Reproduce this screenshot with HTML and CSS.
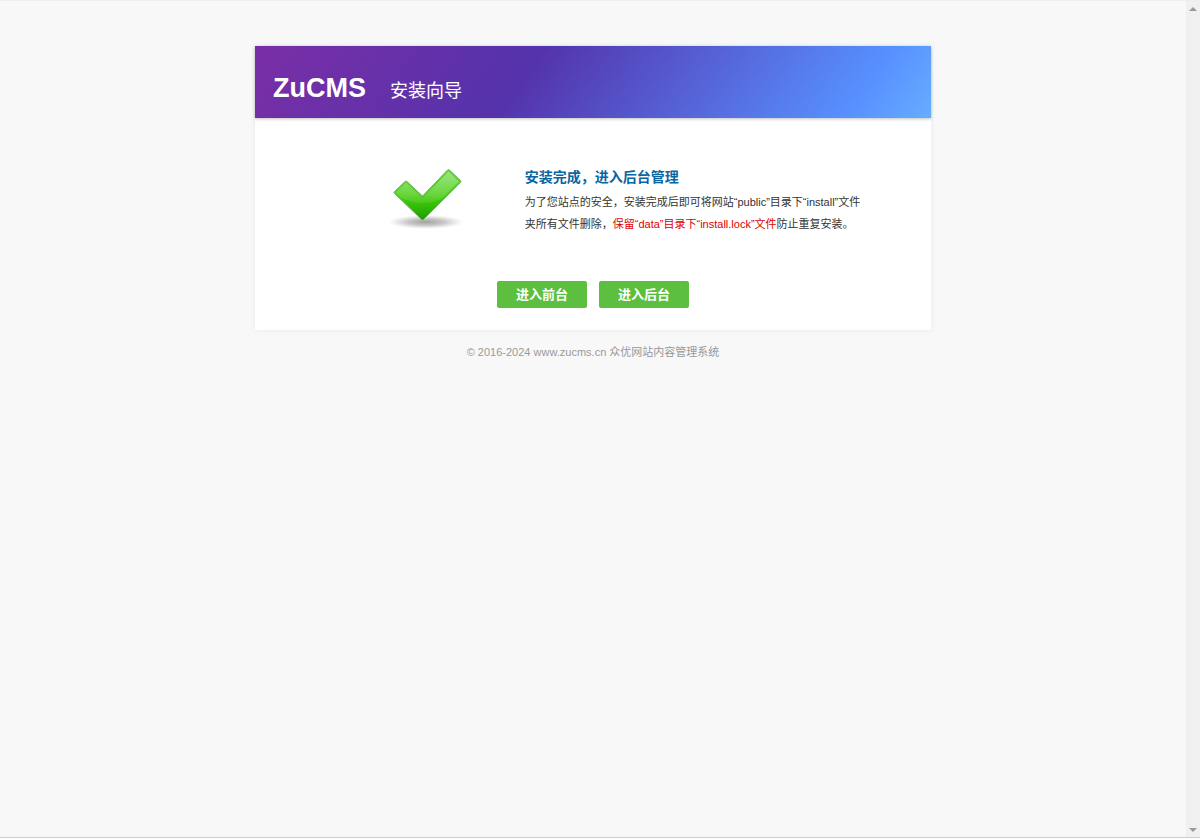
FILE: index.html
```html
<!DOCTYPE html>
<html lang="zh-CN">
<head>
<meta charset="utf-8">
<title>ZuCMS 安装向导</title>
<link rel="stylesheet" href="styles.css">
</head>
<body>
<div class="page">
  <div class="wrap">
    <main class="card">
      <header class="head">
        <h1 class="logo">ZuCMS</h1>
        <span class="subtitle">安装向导</span>
      </header>
      <section class="result">
        <div class="picture">
          <svg class="tick" width="80" height="68" viewBox="0 0 80 68" aria-hidden="true">
            <defs>
              <linearGradient id="green" x1="0" y1="0" x2="0" y2="1">
                <stop offset="0" stop-color="#62d435"/>
                <stop offset=".5" stop-color="#4bce16"/>
                <stop offset=".72" stop-color="#35bd06"/>
                <stop offset="1" stop-color="#1c9c00"/>
              </linearGradient>
              <linearGradient id="gloss" x1="0" y1="0" x2="0" y2="1">
                <stop offset="0" stop-color="#fff" stop-opacity=".38"/>
                <stop offset="1" stop-color="#fff" stop-opacity=".08"/>
              </linearGradient>
              <radialGradient id="shade">
                <stop offset="0" stop-color="#777" stop-opacity=".7"/>
                <stop offset=".5" stop-color="#888" stop-opacity=".45"/>
                <stop offset="1" stop-color="#aaa" stop-opacity="0"/>
              </radialGradient>
            </defs>
            <ellipse cx="39" cy="58" rx="38" ry="7" fill="url(#shade)"/>
            <path d="M7.500 27.500 18 17.500Q19 16.500 20 17.500L35.500 32 60.500 6Q61.500 5 62.500 6L73.500 16.500Q74.500 17.500 73.500 18.500L36.500 55.500Q35.500 56.500 34.500 55.500L7.500 29.500Q6.500 28.500 7.500 27.500Z" fill="url(#green)" stroke="#7cb86d"/>
            <path d="M8.500 28.500 19 18.500 35.500 34 61.500 7.500 72 17.500 55 34Q38 44 14 34Z" fill="url(#gloss)"/>
          </svg>
        </div>
        <div class="message">
          <h2 class="title">安装完成，进入后台管理</h2>
          <p class="text">为了您站点的安全，安装完成后即可将网站“public”目录下“install”文件夹所有文件删除，<span class="warn">保留“data”目录下“install.lock”文件</span>防止重复安装。</p>
        </div>
      </section>
      <nav class="actions">
        <a class="btn" href="#front">进入前台</a>
        <a class="btn" href="#admin">进入后台</a>
      </nav>
    </main>
    <footer class="foot">© 2016-2024 www.zucms.cn 众优网站内容管理系统</footer>
  </div>
  <div class="scroll" aria-hidden="true">
    <svg width="8" height="4" viewBox="0 0 8 4"><path d="M4 0 8 4H0Z" fill="#999"/></svg>
    <svg width="8" height="4" viewBox="0 0 8 4"><path d="M0 0H8L4 4Z" fill="#999"/></svg>
  </div>
</div>
</body>
</html>
```
FILE: styles.css
```css
* { box-sizing: border-box; }
body {
  margin: 0;
  background: #f8f8f8;
  color: #333;
  font: 11px/22px "Liberation Sans", "Noto Sans CJK SC", sans-serif;
}
h1, h2, p { margin: 0; }
.page {
  display: flex;
  min-height: 100vh;
  border-top: 1px solid #eee;
  border-bottom: 1px solid #ccc;
}
.wrap { flex: 1; padding: 45px 0 0; }
.card {
  width: 57%;
  min-width: 600px;
  margin: 0 auto;
  padding-bottom: 22px;
  background: #fff;
  box-shadow: 0 0 6px #e4ebf0;
}
.head {
  display: flex;
  align-items: baseline;
  gap: 24px;
  padding: 24px 18px 9px;
  background: linear-gradient(125deg, #7a2ea6 0%, #5433ac 40%, #5790ff 88%, #66adff 100%);
  box-shadow: 0 1px 3px rgba(0, 0, 0, .25);
  color: #fff;
}
.logo { font-size: 27px; line-height: 36px; }
.subtitle { font-size: 18px; line-height: 36px; }
.result { display: flex; padding: 46px 18px 0 0; }
.picture { width: 41%; display: flex; justify-content: flex-end; }
.tick { margin-right: 58px; }
.message { width: 340px; }
.title { margin-bottom: 1px; color: #0a66a3; font-size: 14px; line-height: 26px; }
.warn { color: #d00; }
.actions { display: flex; justify-content: center; gap: 12px; margin-top: 46px; }
.btn {
  width: 90px;
  border-radius: 2px;
  background: #5cbf40;
  color: #fff;
  font-size: 13px;
  font-weight: bold;
  line-height: 27px;
  text-align: center;
  text-decoration: none;
}
.foot { padding-top: 11px; color: #999; text-align: center; }
.scroll {
  display: flex;
  flex-direction: column;
  justify-content: space-between;
  align-items: center;
  width: 14px;
  padding: 6px 0 5px;
  background: #f0f0f0;
}
```
